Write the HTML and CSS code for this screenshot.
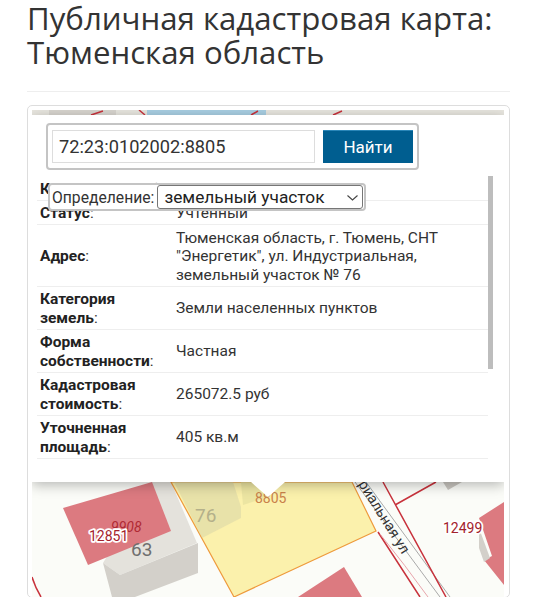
FILE: index.html
```html
<!DOCTYPE html>
<html lang="ru">

<head>
    <meta charset="UTF-8">
    <meta name="viewport" content="width=device-width, initial-scale=1.0">
    <title>Публичная кадастровая карта: Тюменская область</title>
    <link rel="stylesheet" href="styles.css">
</head>

<body>
    <div class="page">
        <h1>Публичная кадастровая карта: Тюменская область</h1>
        <hr class="divider">

        <div class="card">
            <div class="map">
                <!-- viewBox uses page coordinates so shapes are easy to compare -->
                <svg class="map-svg" viewBox="32 110 472 487" width="472" height="487">
                    <rect x="32" y="110" width="472" height="487" fill="#fbfcf8" />
                    <rect x="32" y="110" width="472" height="6" fill="#e8e6df" />
                    <rect x="49" y="110" width="67" height="6" fill="#d8d5cf" />
                    <rect x="147" y="110" width="119" height="6" fill="#a9cfe3" />
                    <path d="M91 115 L103 111 M139 110 L145 115 M251 115 L258 111 M333 115 L342 111" stroke="#c8323c" stroke-width="1.5" fill="none" />

                    <polygon points="152,482 171,482 197,543 120,575 103,563" fill="#e4e2dc" />
                    <polygon points="103,563 120,575 198,543 198,573 135,597 112,597" fill="#d3d0ca" />
                    <polygon points="63,508 152,482 171,531 88,565" fill="#dc7a80" />

                    <polygon points="171,482 352,482 376,531 234,597" fill="#fbf1ac" stroke="#ee9a3c" stroke-width="1.2" />
                    <polygon points="174,482 233,482 241,507 241,518 202,538" fill="#d9d6a8" fill-opacity="0.55" />
                    <polygon points="241,482 251,482 268,497 243,505" fill="#e6df9e" fill-opacity="0.7" />

                    <path d="M355 482 L440 597 M366 482 L450 597" stroke="#a9a9a9" stroke-width="1" fill="none" />
                    <path d="M383 482 L446 597 M378 532 L420 597 M395 505 L436 482" stroke="#c8323c" stroke-width="1.5" fill="none" />
                    <path d="M380 534 Q405 565 428 597" stroke="#e7a4ab" stroke-width="1" fill="none" />
                    <path d="M32 577 Q35 587 41 597" stroke="#c8323c" stroke-width="1.5" fill="none" />

                    <polygon points="443,482 462,482 448,490" fill="#c9c6c0" />
                    <polygon points="479,518 504,502 504,585 484,560 492,556" fill="#dc7a80" />
                    <polygon points="479,528 490,558 484,562 479,548" fill="#d3d0ca" />
                    <polygon points="344,567 362,597 298,597" fill="#dc7a80" />

                    <text class="map-num" x="255" y="503" fill="#c9814a" font-size="14">8805</text>
                    <text class="map-num" x="195" y="522" fill="#b4b08a" font-size="19">76</text>
                    <text class="map-num" x="131" y="556" fill="#6f6f6f" font-size="19">63</text>
                    <text class="map-num map-italic" x="111" y="532" fill="#b02a34" font-size="14">9908</text>
                    <text class="map-num map-halo" x="89" y="541" fill="#a3222c" font-size="14">12851</text>
                    <text class="map-num map-halo" x="443" y="533" fill="#a3222c" font-size="14">12499</text>
                    <text class="map-num" transform="translate(358 484) rotate(58)" fill="#333" font-size="14.5">риальная ул</text>
                </svg>

                <div class="popup">
                    <div class="info">
                        <table class="info-table">
                            <tr>
                                <td class="key key-single"><b>Кадастровый</b> №:</td>
                                <td>72:23:0102002:8805</td>
                            </tr>
                            <tr>
                                <td class="key"><b>Статус</b>:</td>
                                <td>Учтенный</td>
                            </tr>
                            <tr>
                                <td class="key"><b>Адрес</b>:</td>
                                <td>Тюменская область, г. Тюмень, СНТ "Энергетик", ул. Индустриальная, земельный участок № 76</td>
                            </tr>
                            <tr>
                                <td class="key"><b>Категория земель</b>:</td>
                                <td>Земли населенных пунктов</td>
                            </tr>
                            <tr>
                                <td class="key"><b>Форма собственности</b>:</td>
                                <td>Частная</td>
                            </tr>
                            <tr>
                                <td class="key"><b>Кадастровая стоимость</b>:</td>
                                <td>265072.5 руб</td>
                            </tr>
                            <tr>
                                <td class="key"><b>Уточненная площадь</b>:</td>
                                <td>405 кв.м</td>
                            </tr>
                        </table>
                        <div class="scrollbar"></div>
                    </div>
                </div>
                <div class="notch"></div>

                <form class="search">
                    <input class="search-input" type="text" value="72:23:0102002:8805">
                    <button class="search-btn" type="button">Найти</button>
                </form>

                <div class="kind">
                    <label class="kind-label" for="kind">Определение:</label>
                    <div class="kind-field">
                        <select class="kind-select" id="kind">
                            <option>земельный участок</option>
                        </select>
                        <svg class="kind-arrow" viewBox="0 0 11 6" width="11" height="6">
                            <path d="M0.5 0.5 L5.5 5 L10.5 0.5" fill="none" stroke="#444" stroke-width="1.1" />
                        </svg>
                    </div>
                </div>
            </div>
        </div>
    </div>
</body>

</html>
```

FILE: styles.css
```css
html,
body {
    margin: 0;
    background-color: #fff;
}

body {
    font-family: Roboto, "Liberation Sans", sans-serif;
    color: #333;
}

.page {
    height: 597px;
    overflow: hidden;
    padding: 0 26px 0 27px;
}

h1 {
    margin: 0;
    padding-top: 1px;
    font-family: "Open Sans", "Noto Sans", sans-serif;
    font-size: 31.2px;
    font-weight: 400;
    line-height: 34px;
    color: #333;
}

.divider {
    margin: 22px 0 13px;
    border: none;
    border-top: 1px solid #eee;
}

.card {
    border: 1px solid #ddd;
    border-radius: 5px;
    padding: 4px 4px 0;
}

/* map is a free canvas, everything on it is placed over it */
.map {
    position: relative;
    width: 472px;
    height: 487px;
    overflow: hidden;
}

.map-svg {
    display: block;
}

.map-num {
    font-family: Roboto, sans-serif;
}

.map-italic {
    font-style: italic;
}

.map-halo {
    paint-order: stroke;
    stroke: #fff;
    stroke-width: 3.5px;
    stroke-linejoin: round;
}

.popup {
    position: absolute;
    top: 5px;
    left: 0;
    right: 0;
    height: 367px;
    background-color: #fff;
    box-shadow: 0 3px 12px rgba(0, 0, 0, 0.28);
}

.notch {
    position: absolute;
    top: 372px;
    left: 219px;
    width: 0;
    height: 0;
    border-left: 17px solid transparent;
    border-right: 17px solid transparent;
    border-top: 15px solid #fff;
}

.info {
    position: absolute;
    top: 61px;
    left: 5px;
    width: 456px;
    height: 285px;
}

.info-table {
    width: 451px;
    border-collapse: separate;
    border-spacing: 0;
    table-layout: fixed;
    font-size: 15.5px;
    line-height: 18.5px;
    color: #333;
}

.info-table td {
    padding: 3.5px 20px 1.5px 4px;
    border-bottom: 1px solid #eee;
    vertical-align: middle;
}

.info-table .key {
    width: 118px;
    padding-left: 3px;
    padding-right: 14px;
}

.info-table .key-single {
    white-space: nowrap;
}

.info-table b {
    color: #222;
}

.scrollbar {
    position: absolute;
    top: 0;
    right: 0;
    width: 5px;
    height: 193px;
    background-color: #bdbdbd;
}

.search {
    position: absolute;
    top: 13px;
    left: 14px;
    display: flex;
    gap: 8px;
    align-items: stretch;
    width: 361px;
    padding: 5px 4px;
    background-color: #fff;
    border: 2px solid #c4c4c4;
    border-radius: 4px;
}

.search-input {
    width: 263px;
    height: 33px;
    box-sizing: border-box;
    padding: 0 6px;
    border: 1px solid #ddd;
    font-family: inherit;
    font-size: 18.2px;
    color: #333;
    outline: none;
}

.search-btn {
    flex: 1;
    border: none;
    border-top: 1px solid #2a86b8;
    background-color: #005e90;
    font-family: inherit;
    font-size: 17px;
    color: #fff;
}

.kind {
    position: absolute;
    top: 73px;
    left: 16px;
    display: flex;
    gap: 3px;
    align-items: center;
    height: 24px;
    padding: 0 1px 0 2px;
    background-color: #fff;
    border: 2px solid #c4c4c4;
    border-radius: 4px;
}

.kind-label {
    font-size: 15.7px;
    color: #333;
}

.kind-field {
    position: relative;
}

.kind-select {
    display: block;
    width: 206px;
    height: 24px;
    padding: 0 6px;
    appearance: none;
    border: 1px solid #767676;
    border-radius: 3px;
    background-color: #fff;
    font-family: inherit;
    font-size: 17.3px;
    color: #222;
}

.kind-arrow {
    position: absolute;
    top: 10px;
    right: 5px;
}
```
